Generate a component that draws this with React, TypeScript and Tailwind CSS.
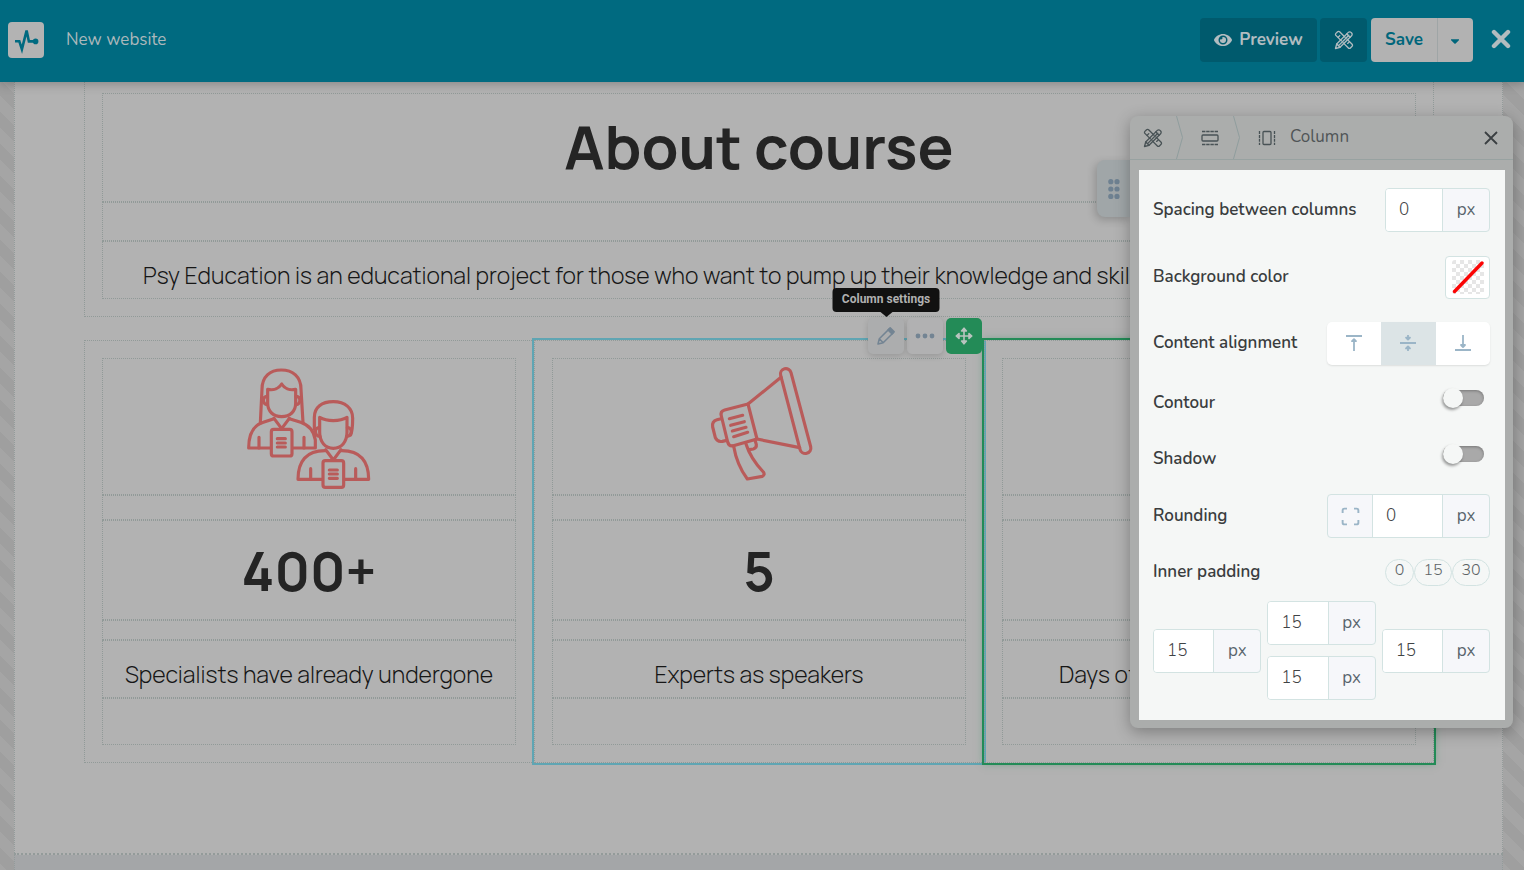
import React from "react";
import { Maximize } from "lucide-react";
import { FaCaretDown, FaEye } from "react-icons/fa";

const uiFont = "font-['Nunito','Open_Sans',sans-serif]";
const siteFont = "font-['Manrope','Inter',sans-serif]";

function Logo() {
  return (
    <svg viewBox="0 0 36 36" className="size-9" aria-hidden="true">
      <path d="M7 19.2h4.3l2.6 8 4.7-18.6 2.3 10.8h5" fill="none" stroke="#006a80" strokeWidth="2.6" strokeLinejoin="miter" />
      <circle cx="27.6" cy="19.4" r="2.8" fill="#006a80" />
    </svg>
  );
}

function ToolsIcon() {
  return (
    <svg viewBox="0 0 20 20" width="20" height="20" fill="none" stroke="currentColor" strokeWidth="1.3" strokeLinejoin="round" strokeLinecap="round" aria-hidden="true">
      <path d="M7.4 10.9 1.9 5.4a1.4 1.4 0 0 1 0-2L3.6 1.7a1.4 1.4 0 0 1 2 0l5.5 5.5M12.8 8.9l5.3 5.4a1.4 1.4 0 0 1 0 2l-1.7 1.7a1.4 1.4 0 0 1-2 0L9 12.6" />
      <path d="m4.2 7.2 1.6-1.6M15.2 12l-1.6 1.4" />
      <path d="M1.5 18.5 2.7 14 14.3 2.4a1.9 1.9 0 0 1 2.7 0l.6.6a1.9 1.9 0 0 1 0 2.7L6 17.3Z" />
      <path d="m2.7 14 3.3 3.3M4.6 15.6 14.8 5.3M12.8 4l3.3 3.3" />
    </svg>
  );
}

function People() {
  return (
    <svg viewBox="48 42 378 378" className="size-[126px]" fill="none" stroke="#b95b5a" strokeWidth="9.5" strokeLinejoin="round" strokeLinecap="round" aria-hidden="true">
      <path d="M91 219 96 118C96 80 120 60 154 60s59 20 59 58l6 100" />
      <path d="M113 118v42c0 24 17 40 42 40s42-16 42-40v-42c-18 4-34-3-42-16-8 13-24 20-42 16Z" />
      <path d="M112 139c-15-2-16 25 0 25M198 139c15-2 16 25 0 25" />
      <path d="m132 205 23 31 23-31" />
      <path d="m132 206-32 11c-30 9-44 34-44 77h66M178 206l34 11c26 9 40 27 44 53v24h-68" />
      <path d="M87 262v32M222 262v32" />
      <rect x="124" y="238" width="62" height="80" rx="7" />
      <path d="M142 266h24M142 279h24M142 291h24" />
      <path d="M253 238v-36c0-30 22-47 57-47s58 19 58 50c0 22-1 38-6 50" />
      <path d="M269 202v45c0 29 17 48 41 48s41-19 41-48v-45c-22 13-60 13-82 0Z" />
      <path d="M268 233c-15-2-16 26 2 26M352 233c15-2 16 26-2 26" />
      <path d="m287 299 23 31 23-31" />
      <path d="M287 302c-58-1-83 32-83 86h73M333 302c58-1 83 32 83 86h-73" />
      <path d="M242 356v32M377 356v32" />
      <rect x="279" y="332" width="62" height="80" rx="7" />
      <path d="M298 360h24M298 372h24M298 385h24" />
    </svg>
  );
}

function Megaphone() {
  return (
    <svg viewBox="18 42 378 378" className="size-[126px]" fill="none" stroke="#b95b5a" strokeWidth="9.5" strokeLinejoin="round" strokeLinecap="round" aria-hidden="true">
      <path d="M272 76a16 16 0 0 1 31-8l59 222a16 16 0 0 1-32 8Z" />
      <path d="m273 82-99 80M201 267l128 26" />
      <path d="m174 162-70 18q-14 4-10 18l19 78q4 14 17 11l71-20Z" />
      <path d="m93 206-12 3q-16 4-13 22l8 32q6 14 21 11l13-3" />
      <path d="m118 206 40-10M122 226l41-11M127 243l41-11M131 260l42-13" />
      <path d="M131 289c7 41 19 69 41 98l45-8q9-5 3-13c-20-21-40-46-52-84" />
      <path d="m178 299 12-2q10-3 9-13l-4-14" />
    </svg>
  );
}

function SectionIcon() {
  return (
    <svg viewBox="0 0 18 16" width="18" height="16" fill="none" stroke="currentColor" strokeWidth="1.3" aria-hidden="true">
      <rect x="1" y="5" width="16" height="6" rx="1" />
      <path d="M1 1.5h16M1 14.5h16" strokeDasharray="3.4 .8" />
    </svg>
  );
}

function ColumnIcon() {
  return (
    <svg viewBox="0 0 18 16" width="18" height="16" fill="none" stroke="currentColor" strokeWidth="1.3" aria-hidden="true">
      <rect x="5" y="1.5" width="8" height="13" rx="1" />
      <path d="M1.5 1v14M16.5 1v14" strokeDasharray="3 .9" />
    </svg>
  );
}

function Chevron() {
  return (
    <svg viewBox="0 0 7 43" width="7" height="43" fill="none" stroke="#8f9d9d" aria-hidden="true">
      <path d="m.5 0 6 21.5-6 21.5" />
    </svg>
  );
}

function AlignIcon({ kind }: { kind: "top" | "middle" | "bottom" }) {
  return (
    <svg viewBox="0 0 16 18" width="16" height="18" fill="none" stroke="#9bb5c7" strokeWidth="1.8" strokeLinejoin="round" aria-hidden="true">
      {kind === "top" && (
        <>
          <path d="M0 2h16M8 17V5" />
          <path d="m6 7.2 2-2 2 2Z" fill="#9bb5c7" />
        </>
      )}
      {kind === "middle" && (
        <>
          <path d="M0 9h16M8 1v4M8 17v-4" />
          <path d="m6 3.6 2 2 2-2ZM6 14.4l2-2 2 2Z" fill="#9bb5c7" />
        </>
      )}
      {kind === "bottom" && (
        <>
          <path d="M0 16h16M8 1v12" />
          <path d="m6 11 2 2 2-2Z" fill="#9bb5c7" />
        </>
      )}
    </svg>
  );
}

function Widget({ className, children }: { className: string; children?: React.ReactNode }) {
  return <div className={`flex items-center justify-center border border-dotted border-[#919a98] ${className}`}>{children}</div>;
}

function Column({ className, icon, value, caption, captionAlign = "text-center", children }: { className: string; icon?: React.ReactNode; value?: string; caption: string; captionAlign?: string; children?: React.ReactNode }) {
  return (
    <section className={`relative min-w-0 flex-1 border border-dotted border-[#919a98] p-[17px] ${className}`}>
      <Widget className="h-[137px]">{icon}</Widget>
      <Widget className="h-[25px]" />
      <Widget className="h-[100px]">
        {value && <h2 className="text-[54px] leading-none font-bold">{value}</h2>}
      </Widget>
      <Widget className="h-5" />
      <Widget className="h-[58px]">
        <p className={`w-full pt-2.5 text-[23px] leading-8 font-light whitespace-nowrap text-[#161616] ${captionAlign}`}>{caption}</p>
      </Widget>
      <Widget className="h-[47px]" />
      {children}
    </section>
  );
}

function UnitField({ label, value, id, className, icon }: { label: string; value: string; id: string; className: string; icon?: React.ReactNode }) {
  return (
    <div className={`flex h-11 overflow-hidden rounded-[4px] border border-[#d3e3e2] bg-[#f6f7fa] ${className}`}>
      {icon}
      <input id={id} aria-label={label} defaultValue={value} className="min-w-0 flex-1 border-r border-[#d3e3e2] bg-white pl-[13px] text-[17px] font-light text-[#3f4345] outline-none" />
      <button type="button" aria-label={`${label} unit`} className="w-[46px] text-[17px] text-[#58646c]">px</button>
    </div>
  );
}

function Switch({ id }: { id: string }) {
  return (
    <input
      id={id}
      type="checkbox"
      role="switch"
      className="relative mr-1.5 mb-2.5 h-4 w-[41px] appearance-none rounded-full bg-[#a9a9a9] shadow-[inset_0_1px_3px_rgba(0,0,0,0.3)] before:absolute before:-top-[2px] before:left-0 before:size-5 before:rounded-full before:bg-[#f5f7f6] before:shadow-[-1px_2px_3px_rgba(0,0,0,0.4)] before:content-['']"
    />
  );
}

const rowLabel = "text-[17px] leading-6 font-semibold text-[#3a3d3e]";

function SettingsPanel() {
  return (
    <aside aria-label="Column" className={`absolute top-[116px] right-[11px] z-40 w-[383px] ${uiFont}`}>
      <button type="button" aria-label="Move panel" className="absolute top-11 -left-[33px] flex h-[57px] w-[34px] items-center justify-center rounded-l-lg bg-[#a0a6a8] shadow-[-2px_3px_8px_rgba(0,0,0,0.2)]">
        <svg viewBox="0 0 12 20" width="12" height="20" fill="#6e8191" aria-hidden="true">
          <circle cx="2.8" cy="2.7" r="2.6" /><circle cx="9" cy="2.7" r="2.6" />
          <circle cx="2.8" cy="10" r="2.6" /><circle cx="9" cy="10" r="2.6" />
          <circle cx="2.8" cy="17.4" r="2.6" /><circle cx="9" cy="17.4" r="2.6" />
        </svg>
      </button>
      <div className="relative rounded-lg bg-[#abadac] shadow-[0_4px_16px_rgba(0,0,0,0.3)]">
        <nav className="flex h-11 items-center border-b border-[#98a2a1] text-[#485255]">
          <button type="button" aria-label="Site settings" className="flex w-[46px] justify-center"><ToolsIcon /></button>
          <Chevron />
          <button type="button" aria-label="Section" className="flex w-[50px] justify-center pl-1"><SectionIcon /></button>
          <Chevron />
          <span className="flex flex-1 items-center gap-3.5 pl-[18px]">
            <ColumnIcon />
            <span className="pb-0.5 text-[17px] leading-6 text-[#505557]">Column</span>
          </span>
          <button type="button" aria-label="Close panel" className="mr-[15px]">
            <svg viewBox="0 0 14 14" width="14" height="14" stroke="#3a3f42" strokeWidth="1.8" aria-hidden="true"><path d="m1 1 12 12M13 1 1 13" /></svg>
          </button>
        </nav>
        <div className="pt-2.5 pr-2 pb-2 pl-[9px]">
          <form className="bg-[#f5f7f6] pt-[18px] pr-[15px] pb-5 pl-3.5" onSubmit={(e) => e.preventDefault()}>
            <div className="flex h-11 items-center justify-between">
              <label htmlFor="spacing" className={rowLabel}>Spacing between columns</label>
              <UnitField id="spacing" label="Spacing between columns" value="0" className="w-[105px]" />
            </div>
            <div className="mt-[23px] flex h-11 items-center justify-between">
              <span className={rowLabel}>Background color</span>
              <button type="button" aria-label="Background color" className="flex h-[43px] w-[45px] items-center justify-center rounded-[4px] border border-[#d3e3e2] bg-white">
                <svg viewBox="0 0 32 34" width="32" height="34" aria-hidden="true">
                  <defs>
                    <pattern id="checks" width="8" height="8" patternUnits="userSpaceOnUse">
                      <path d="M0 0h4v4H0zM4 4h4v4H4z" fill="#e6e6e6" />
                    </pattern>
                  </defs>
                  <rect width="32" height="34" rx="3" fill="url(#checks)" />
                  <path d="M2.5 31.5 30 3" stroke="#fb0505" strokeWidth="3.4" strokeLinecap="round" />
                </svg>
              </button>
            </div>
            <div className="mt-[22px] flex h-11 items-center justify-between">
              <span className={rowLabel}>Content alignment</span>
              <div role="group" aria-label="Content alignment" className="flex h-[43px] w-[163px] overflow-hidden rounded-[5px] bg-white shadow-[0_1px_2px_rgba(0,0,0,0.1)]">
                <button type="button" aria-label="Top" className="flex flex-1 items-center justify-center"><AlignIcon kind="top" /></button>
                <button type="button" aria-label="Middle" aria-pressed="true" className="flex flex-1 items-center justify-center bg-[#dce4e6]"><AlignIcon kind="middle" /></button>
                <button type="button" aria-label="Bottom" className="flex flex-1 items-center justify-center"><AlignIcon kind="bottom" /></button>
              </div>
            </div>
            <div className="mt-[26px] flex h-6 items-center justify-between">
              <label htmlFor="contour" className={rowLabel}>Contour</label>
              <Switch id="contour" />
            </div>
            <div className="mt-8 flex h-6 items-center justify-between">
              <label htmlFor="shadow" className={rowLabel}>Shadow</label>
              <Switch id="shadow" />
            </div>
            <div className="mt-[23px] flex h-11 items-center justify-between">
              <label htmlFor="rounding" className={rowLabel}>Rounding</label>
              <UnitField
                id="rounding"
                label="Rounding"
                value="0"
                className="w-[163px]"
                icon={
                  <button type="button" aria-label="Round corners separately" className="flex w-[45px] items-center justify-center border-r border-[#d3e3e2] text-[#9bb5c7]">
                    <Maximize size={21} strokeWidth={2.2} strokeLinecap="butt" />
                  </button>
                }
              />
            </div>
            <div className="mt-[21px] flex h-[26px] items-center justify-between">
              <span className={rowLabel}>Inner padding</span>
              <div className="flex text-[16px] leading-none font-light text-[#5e6466]">
                <button type="button" className="h-[27px] w-[29px] rounded-full border border-[#d3e3e2] pb-1">0</button>
                <button type="button" className="h-[27px] w-[38px] rounded-full border border-[#d3e3e2] pb-1">15</button>
                <button type="button" className="h-[27px] w-[38px] rounded-full border border-[#d3e3e2] pb-1">30</button>
              </div>
            </div>
            <div className="mt-4 grid grid-cols-3 items-center gap-1.5">
              <UnitField id="pad-left" label="Left padding" value="15" className="w-full" />
              <div className="flex flex-col gap-[11px]">
                <UnitField id="pad-top" label="Top padding" value="15" className="w-full" />
                <UnitField id="pad-bottom" label="Bottom padding" value="15" className="w-full" />
              </div>
              <UnitField id="pad-right" label="Right padding" value="15" className="w-full" />
            </div>
          </form>
        </div>
      </div>
    </aside>
  );
}

function ColumnToolbar() {
  const base = "flex size-9 items-center justify-center rounded-[5px]";
  return (
    <div className="absolute -top-[23px] right-px z-20 flex gap-[3px]">
      <div className="relative">
        <button type="button" aria-label="Column settings" className={`${base} bg-[#acadae] shadow-[0_2px_6px_rgba(0,0,0,0.15)]`}>
          <svg viewBox="0 0 20 20" width="20" height="20" fill="none" stroke="#738493" strokeWidth="1.5" strokeLinejoin="round" aria-hidden="true">
            <path d="M2 18 3.3 12.8 13.5 2.6l4 3.9L7.2 16.7ZM3.3 12.8l3.9 3.9" />
            <path d="m12 4 2.2-2.2 4 4L16 8Z" fill="#738493" />
          </svg>
        </button>
        <span role="tooltip" className="absolute -top-[30px] left-1/2 flex h-6 w-[107px] -translate-x-1/2 items-center justify-center rounded-[4px] bg-[#111] pb-0.5 font-['Roboto',sans-serif] text-[12px] font-bold whitespace-nowrap text-[#b0b0b0] after:absolute after:top-full after:left-1/2 after:-translate-x-1/2 after:border-x-6 after:border-t-5 after:border-x-transparent after:border-t-[#111] after:content-['']">
          Column settings
        </span>
      </div>
      <button type="button" aria-label="More actions" className={`${base} bg-[#b1b1b2] shadow-[0_2px_6px_rgba(0,0,0,0.15)]`}>
        <svg viewBox="0 0 20 6" width="20" height="6" fill="#738493" aria-hidden="true">
          <circle cx="3" cy="3" r="2.4" /><circle cx="10" cy="3" r="2.4" /><circle cx="17" cy="3" r="2.4" />
        </svg>
      </button>
      <button type="button" aria-label="Move column" className={`${base} bg-[#238b57]`}>
        <svg viewBox="0 0 18 18" width="18" height="18" fill="#b9c4bf" stroke="#b9c4bf" strokeWidth="1.6" strokeLinejoin="round" strokeLinecap="round" aria-hidden="true">
          <path d="M9 2v14M2 9h14" />
          <path d="M9 1.2 11.4 4H6.6ZM9 16.8 6.6 14h4.8ZM1.2 9 4 6.6v4.8ZM16.8 9 14 11.4V6.6Z" />
        </svg>
      </button>
    </div>
  );
}

export default function App() {
  return (
    <div className={`relative flex min-h-screen flex-col overflow-hidden bg-[#a4a4a4] bg-[linear-gradient(45deg,#9f9f9f_25%,#a5a5a5_25%,#a5a5a5_50%,#9f9f9f_50%,#9f9f9f_75%,#a5a5a5_75%)] bg-[size:32px_32px] ${uiFont}`}>
      <header className="relative z-30 flex h-[82px] items-center bg-[#006a80] pr-[13px] pb-[3px] pl-2 text-[17px] shadow-[0_2px_10px_rgba(0,0,0,0.25)]">
        <a href="#home" aria-label="Home" className="rounded-[4px] bg-[#b3b3b3]"><Logo /></a>
        <span className="ml-[22px] text-[#adb8bb]">New website</span>
        <div className="ml-auto flex items-center">
          <button type="button" className="flex h-11 w-[117px] items-center justify-center gap-[7px] rounded-[4px] bg-[#005a6d] font-bold text-[#b2bcc0]">
            <FaEye size={18} />
            Preview
          </button>
          <button type="button" aria-label="Site settings" className="ml-[3px] flex h-11 w-[47px] items-center justify-center rounded-[4px] bg-[#005a6d] text-[#b2bcc0]">
            <ToolsIcon />
          </button>
          <div className="ml-1 flex h-11 overflow-hidden rounded-[4px] bg-[#b2b2b2] text-[#00667b]">
            <button type="button" className="w-[66px] font-bold">Save</button>
            <button type="button" aria-label="Save options" className="flex w-9 items-center justify-center border-l border-[#9fa5a6] pt-0.5 pr-0.5"><FaCaretDown size={14} /></button>
          </div>
          <button type="button" aria-label="Close editor" className="ml-[18px] pb-0.5">
            <svg viewBox="0 0 20 20" width="20" height="20" stroke="#b2bcbf" strokeWidth="4.4" strokeLinecap="round" aria-hidden="true"><path d="m3 3 14 14M17 3 3 17" /></svg>
          </button>
        </div>
      </header>

      <main className={`mr-[21px] ml-3.5 border-x border-b-2 border-dotted border-[#939b9a] bg-[#b2b2b2] pr-[68px] pb-[90px] pl-[69px] text-[#242424] ${siteFont}`}>
        <section className="border border-t-0 border-dotted border-[#919a98] px-[17px] pt-[11px] pb-[17px]">
          <Widget className="h-[109px] pb-1">
            <h1 className="text-[60px] leading-none font-bold">About course</h1>
          </Widget>
          <Widget className="h-[39px]" />
          <Widget className="h-[58px]">
            <p className="w-full pt-2.5 pl-10 text-[23px] leading-8 font-light whitespace-nowrap text-[#161616]">
              Psy Education is an educational project for those who want to pump up their knowledge and skill
            </p>
          </Widget>
        </section>
        <div className="mt-[23px] flex">
          <Column className="" icon={<People />} value="400+" caption="Specialists have already undergone" />
          <Column className="outline-2 outline-[#5fa5b3]" icon={<Megaphone />} value="5" caption="Experts as speakers">
            <ColumnToolbar />
          </Column>
          <Column className="z-10 shadow-[0_0_8px_rgba(30,140,85,0.5)] outline-2 outline-[#238b57]" caption="Days of" captionAlign="pl-14" />
        </div>
      </main>
      <div className="mr-[21px] ml-3.5 flex-1 border-x border-dotted border-[#939b9a] bg-[#a4a6a8]" />

      <SettingsPanel />
    </div>
  );
}
